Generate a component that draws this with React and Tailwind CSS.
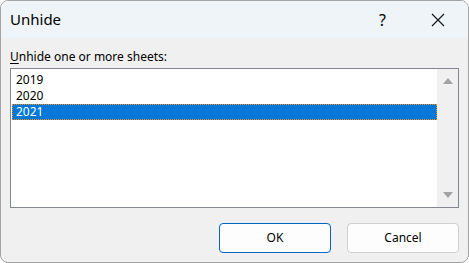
import React from "react";

const font = { fontFamily: '"Segoe UI", "Noto Sans", "Open Sans", sans-serif' };

export default function App() {
  const sheets = ["2019", "2020", "2021"];
  const selected = "2021";

  return (
    <div className="w-[469px] h-[263px] bg-white" style={font}>
      <div className="w-full h-full flex flex-col border border-[#a3a3a3] rounded-[8px] overflow-hidden bg-[#f0f0f0]">
        {/* title bar */}
        <div className="h-[37px] shrink-0 flex items-center bg-[#eff4f9] pl-[9px]">
          <span className="text-[15px] text-black leading-none">Unhide</span>
          <span className="ml-auto mr-[45px] text-[16px] leading-none text-black">?</span>
          <svg width="14" height="14" viewBox="0 0 14 14" className="mr-[23px]">
            <path d="M1 1 L13 13 M13 1 L1 13" stroke="#1a1a1a" strokeWidth="1.2" />
          </svg>
        </div>

        {/* body */}
        <div className="flex-1 flex flex-col px-[9px]">
          <div className="text-[12px] text-black mt-[11px] leading-[15px]">
            <span className="underline underline-offset-2">U</span>nhide one or more sheets:
          </div>
          <div className="mt-[4px] h-[140px] border border-[#828790] bg-white flex">
            <div className="flex-1 pt-[3px] pl-[1px]">
              {sheets.map((s) => (
                <div
                  key={s}
                  className={`h-[16px] pl-[4px] text-[12px] leading-[16px] ${
                    s === selected
                      ? "bg-[#0078d7] text-white outline-1 outline-dotted outline-[#f58a1f] -outline-offset-1"
                      : "text-black"
                  }`}
                >
                  {s}
                </div>
              ))}
            </div>
            <div className="w-[21px] bg-[#f0f0f0] flex flex-col items-center justify-between py-[9px]">
              <svg width="10" height="6" viewBox="0 0 10 6">
                <path d="M5 0 L10 6 L0 6 Z" fill="#a3a3a3" />
              </svg>
              <svg width="10" height="6" viewBox="0 0 10 6">
                <path d="M0 0 L10 0 L5 6 Z" fill="#a3a3a3" />
              </svg>
            </div>
          </div>

          <div className="flex justify-end gap-[16px] mt-[15px]">
            <button className="w-[112px] h-[30px] rounded-[4px] border border-[#0067c0] bg-[#fdfdfd] text-[12px] text-black">
              OK
            </button>
            <button className="w-[112px] h-[30px] rounded-[4px] border border-[#d0d0d0] bg-[#fdfdfd] text-[12px] text-black">
              Cancel
            </button>
          </div>
        </div>
      </div>
    </div>
  );
}
